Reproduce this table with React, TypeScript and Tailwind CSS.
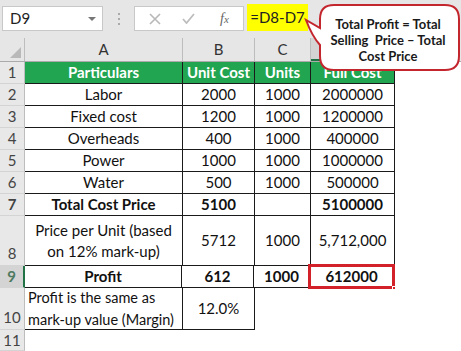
import React from 'react'

const ROW_H = [22, 22, 22, 22, 22, 22, 22, 50, 22, 42]

type CellProps = { w: string; children?: React.ReactNode; cls?: string }

function Cell({ w, children, cls = '' }: CellProps) {
  return <div className={`${w} h-full flex items-center justify-center text-center shrink-0 ${cls}`}>{children}</div>
}

function RowHead({ n, h, bottom, selected }: { n: number; h: number; bottom?: boolean; selected?: boolean }) {
  return (
    <div
      style={{ height: h }}
      className={`w-[25px] shrink-0 flex justify-center border-b border-[#d4d4d4] text-[15px] ${bottom ? 'items-end pb-[1px]' : 'items-center'} ${selected ? 'bg-[#d4d4d4] text-[#4d7a60] border-r-2 border-r-[#217346]' : 'bg-[#e8e8e8] text-[#444] border-r border-r-[#bdbdbd]'}`}
    >
      {n}
    </div>
  )
}

const data = [
  ['Labor', '2000', '1000', '2000000'],
  ['Fixed cost', '1200', '1000', '1200000'],
  ['Overheads', '400', '1000', '400000'],
  ['Power', '1000', '1000', '1000000'],
  ['Water', '500', '1000', '500000'],
]

export default function App() {
  const b = 'border-r border-b border-[#1a1a1a]'
  return (
    <div className="w-[461px] h-[351px] bg-white relative overflow-hidden font-['Lato',sans-serif] text-[#111]">
      {/* formula bar */}
      <div className="h-[38px] bg-[#e6e6e6] flex items-start pt-[6px]">
        <div className="ml-[2px] w-[101px] h-[25px] bg-white border border-[#c8c8c8] flex items-center justify-between pl-[7px] pr-[6px] text-[15px] text-[#222]">
          <span>D9</span>
          <span className="w-0 h-0 border-l-[4px] border-r-[4px] border-t-[4px] border-l-transparent border-r-transparent border-t-[#777]" />
        </div>
        <div className="w-[31px] h-[25px] flex flex-col items-center justify-center gap-[3px]">
          <span className="w-[2px] h-[2px] bg-[#aaa]" />
          <span className="w-[2px] h-[2px] bg-[#aaa]" />
          <span className="w-[2px] h-[2px] bg-[#aaa]" />
        </div>
        <div className="w-[110px] h-[25px] bg-white border border-[#c8c8c8] flex items-center text-[#b5b5b5]">
          <svg width="12" height="12" viewBox="0 0 12 12" className="ml-[14px]">
            <path d="M1 1 L11 11 M11 1 L1 11" stroke="#b8b8b8" strokeWidth="1.6" />
          </svg>
          <svg width="13" height="11" viewBox="0 0 13 11" className="ml-[21px]">
            <path d="M1 6 L4.5 10 L12 1" stroke="#bdbdbd" strokeWidth="1.8" fill="none" />
          </svg>
          <span className="ml-[25px] font-['Liberation_Serif',serif] italic text-[14px] text-[#666]">f<span className="text-[11px]">x</span></span>
        </div>
        <div className="ml-[3px] -mt-[2px] w-[61px] h-[27px] bg-[#ffff00] flex items-center justify-center text-[15px] text-[#222]">=D8-D7</div>
      </div>

      {/* column header */}
      <div className="h-[24px] flex bg-[#e6e6e6] border-b border-[#ababab] text-[15px] text-[#333]">
        <div className="w-[25px] shrink-0 border-r border-[#bdbdbd] relative">
          <span className="absolute right-[3px] bottom-[3px] w-0 h-0 border-l-[11px] border-t-[11px] border-l-transparent border-t-transparent border-b-0 border-r-0" style={{ borderBottom: '11px solid #b9b9b9', borderLeftWidth: 11 }} />
        </div>
        <div className="w-[158px] shrink-0 border-r border-[#bdbdbd] flex items-center justify-center">A</div>
        <div className="w-[72px] shrink-0 border-r border-[#bdbdbd] flex items-center justify-center">B</div>
        <div className="w-[56px] shrink-0 border-r border-[#bdbdbd] flex items-center justify-center">C</div>
        <div className="w-[84px] shrink-0 bg-[#d4d4d4] border-r border-[#bdbdbd] border-b-2 border-b-[#217346]" />
        <div className="flex-1" />
      </div>

      {/* row 1 */}
      <div className="flex h-[22px]">
        <RowHead n={1} h={22} />
        <div className="flex h-full bg-[#21a550] text-white font-bold text-[15px]">
          <Cell w="w-[158px]" cls="border-r border-b border-[#1a1a1a]">Particulars</Cell>
          <Cell w="w-[72px]" cls="border-r border-b border-[#1a1a1a]">Unit Cost</Cell>
          <Cell w="w-[56px]" cls="border-r border-b border-[#1a1a1a]">Units</Cell>
          <Cell w="w-[84px]" cls="border-r border-b border-[#1a1a1a]">Full Cost</Cell>
        </div>
      </div>

      {data.map((r, i) => (
        <div key={i} className="flex h-[22px] text-[15px]">
          <RowHead n={i + 2} h={ROW_H[i + 1]} />
          <Cell w="w-[158px]" cls={b}>{r[0]}</Cell>
          <Cell w="w-[72px]" cls={b}>{r[1]}</Cell>
          <Cell w="w-[56px]" cls={b}>{r[2]}</Cell>
          <Cell w="w-[84px]" cls={b}>{r[3]}</Cell>
        </div>
      ))}

      {/* row 7 */}
      <div className="flex h-[22px] text-[15px] font-bold">
        <RowHead n={7} h={22} />
        <Cell w="w-[158px]" cls={b}>Total Cost Price</Cell>
        <Cell w="w-[72px]" cls={b}>5100</Cell>
        <Cell w="w-[56px]" cls={b}></Cell>
        <Cell w="w-[84px]" cls={b}>5100000</Cell>
      </div>

      {/* row 8 */}
      <div className="flex h-[50px] text-[15px]">
        <RowHead n={8} h={50} bottom />
        <Cell w="w-[158px]" cls={`${b} leading-[21px]`}>Price per Unit (based<br />on 12% mark-up)</Cell>
        <Cell w="w-[72px]" cls={b}>5712</Cell>
        <Cell w="w-[56px]" cls={b}>1000</Cell>
        <Cell w="w-[84px]" cls={b}>5,712,000</Cell>
      </div>

      {/* row 9 */}
      <div className="flex h-[22px] text-[15px] font-bold">
        <RowHead n={9} h={22} selected />
        <Cell w="w-[157px]" cls={b}>Profit</Cell>
        <Cell w="w-[72px]" cls={b}>612</Cell>
        <Cell w="w-[56px]" cls={b}>1000</Cell>
        <Cell w="w-[84px]" cls={`${b} relative`}>
          612000
          <span className="absolute -left-[2px] -top-[2px] -right-[2px] -bottom-[2px] border-[3px] border-[#d3212a]" />
          <span className="absolute -right-[3px] -bottom-[3px] w-[4px] h-[4px] bg-[#d3212a] border border-white" />
        </Cell>
      </div>

      {/* row 10 */}
      <div className="flex h-[42px] text-[15px]">
        <RowHead n={10} h={42} bottom />
        <div className={`w-[158px] h-full shrink-0 flex flex-col justify-center pl-[3px] leading-[22px] whitespace-nowrap text-[14.5px] ${b}`}>
          <span>Profit is the same as</span>
          <span>mark-up value (Margin)</span>
        </div>
        <Cell w="w-[72px]" cls={b}>12.0%</Cell>
      </div>

      {/* row 11 */}
      <div className="flex h-[21px]">
        <RowHead n={11} h={21} />
      </div>

      {/* callout */}
      <svg width="161" height="76" viewBox="0 0 161 76" className="absolute left-[300px] top-0">
        <path
          d="M34 5 H145 Q159 5 159 19 V56 Q159 70 145 70 H34 Q20 70 20 56 V45 Q12 36 6 20 L20 28 V19 Q20 5 34 5 Z"
          fill="white"
          stroke="#c4262e"
          strokeWidth="2"
        />
      </svg>
      <div className="absolute left-[326px] top-[16px] w-[124px] text-center font-bold text-[13px] leading-[16px] text-[#1a1a1a] whitespace-nowrap">
        <div>Total Profit = Total</div>
        <div>Selling&nbsp; Price – Total</div>
        <div>Cost Price</div>
      </div>
    </div>
  )
}
